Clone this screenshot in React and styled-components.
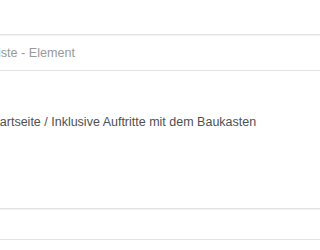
import React from "react";
import styled, { createGlobalStyle } from "styled-components";

const Global = createGlobalStyle`
  html, body { margin: 0; padding: 0; background: #fff; overflow: hidden; }
  body { font-family: "Liberation Sans", Arial, Helvetica, sans-serif; }
`;

const Viewport = styled.div`
  width: 100%;
  height: 250px;
  overflow: hidden;
`;

const Sheet = styled.div`
  width: calc(100% + 60px);
  margin-left: -21px;
  padding-top: 34px;
  display: flex;
  flex-direction: column;
`;

const Field = styled.div`
  box-sizing: border-box;
  height: ${(p) => p.$h}px;
  border-top: 1px solid #e3e3e3;
  border-bottom: 1px solid #e3e3e3;
  box-shadow: inset 0 1px 1px rgba(0, 0, 0, 0.06);
  display: flex;
  align-items: center;
  padding: 0 12px;
  font-size: 12.6px;
  color: #999;
`;

const Line = styled.div`
  padding-left: ${(p) => p.$indent}px;
  margin-top: ${(p) => p.$top}px;
  font-size: 12.5px;
  line-height: 16px;
  color: #505050;
  white-space: nowrap;
`;

const Spacer = styled.div`
  height: ${(p) => p.$h}px;
`;

export default function App() {
  return (
    <>
      <Global />
      <Viewport>
        <Sheet>
          <Field $h={37}>Liste - Element</Field>
          <Line $top={43} $indent={9}>
            Startseite / Inklusive Auftritte mit dem Baukasten
          </Line>
          <Spacer $h={78} />
          <Field $h={32} />
        </Sheet>
      </Viewport>
    </>
  );
}
